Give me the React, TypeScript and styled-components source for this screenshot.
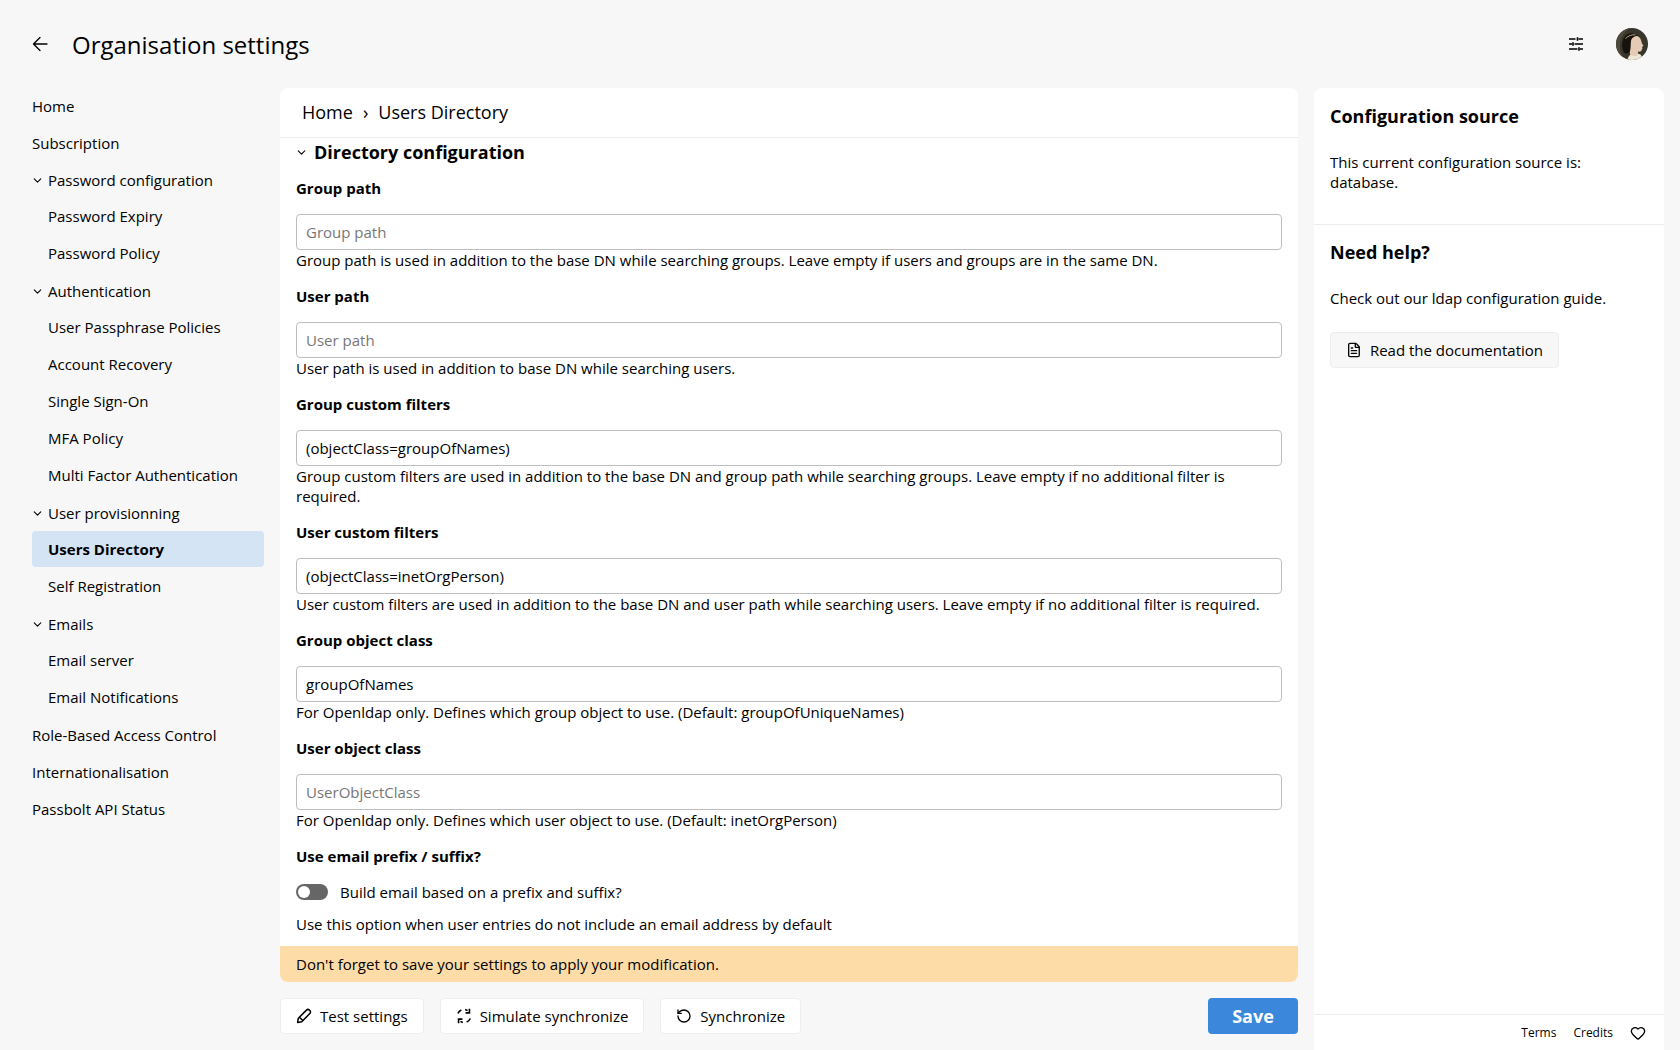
import React from 'react';
import styled, { createGlobalStyle } from 'styled-components';
import { ChevronDown, FileText, Heart, RotateCcw } from 'lucide-react';

const GlobalStyle = createGlobalStyle`
    html, body {
        margin: 0;
        padding: 0;
        height: 100%;
        background: #f7f7f7;
    }
    body {
        font-family: 'Open Sans', 'Liberation Sans', sans-serif;
        font-size: 15px;
        color: #000;
    }
    * {
        box-sizing: border-box;
    }
`;

const Page = styled.div`
    display: flex;
    flex-direction: column;
    height: 1050px;
    overflow: hidden;
`;

const Header = styled.header`
    display: flex;
    align-items: center;
    justify-content: space-between;
    height: 88px;
    padding: 0 32px;
    flex: none;
`;

const HeaderLeft = styled.div`
    display: flex;
    align-items: center;
    gap: 24px;
`;

const HeaderRight = styled.div`
    display: flex;
    align-items: center;
    gap: 33px;
`;

const PageTitle = styled.h1`
    margin: 2px 0 0 0;
    font-size: 24px;
    font-weight: 400;
    line-height: 32px;
`;

const Body = styled.div`
    display: flex;
    flex: 1;
    min-height: 0;
`;

const Sidebar = styled.nav`
    display: flex;
    flex-direction: column;
    gap: 1px;
    width: 280px;
    flex: none;
    padding: 0 16px 0 32px;
`;

const NavGroup = styled.div`
    display: flex;
    flex-direction: column;
    gap: 1px;
    margin: -1px 0 1px 0;
`;

const NavRow = styled.div<{ $level?: number; $active?: boolean }>`
    display: flex;
    align-items: center;
    height: 36px;
    flex: none;
    padding-left: ${({ $level }) => ($level ? '16px' : '0')};
    background: ${({ $active }) => ($active ? '#d4e4f5' : 'transparent')};
    border-radius: 4px;
    font-weight: ${({ $active }) => ($active ? 700 : 400)};
`;

const NavChevron = styled(ChevronDown)`
    width: 13px;
    height: 13px;
    margin-left: -1px;
    margin-right: 4px;
    flex: none;
`;

const Main = styled.main`
    display: flex;
    flex-direction: column;
    gap: 16px;
    width: 1018px;
    flex: none;
    padding-bottom: 16px;
`;

const Card = styled.section`
    display: flex;
    flex-direction: column;
    flex: 1;
    min-height: 0;
    background: #fff;
    border-radius: 8px;
    overflow: hidden;
`;

const Breadcrumbs = styled.div`
    display: flex;
    align-items: center;
    gap: 10px;
    height: 50px;
    padding: 0 22px 2px 22px;
    flex: none;
    border-bottom: 1px solid #eee;
    font-size: 18px;
`;

const Form = styled.div`
    flex: 1;
    min-height: 0;
    overflow: hidden;
    padding: 0 16px;
`;

const SectionTitle = styled.h2`
    display: flex;
    align-items: center;
    gap: 6px;
    margin: -1px 0 11px -1px;
    height: 30px;
    font-size: 18px;
    font-weight: 700;
`;

const SectionChevron = styled(ChevronDown)`
    width: 13px;
    height: 13px;
`;

const Field = styled.div`
    display: flex;
    flex-direction: column;
    margin-bottom: 16px;
    line-height: 20px;
    &:last-child {
        margin-bottom: 0;
    }
`;

const Label = styled.label`
    font-weight: 700;
    margin-bottom: 16px;
`;

const Input = styled.input`
    height: 36px;
    padding: 0 9px;
    border: 1px solid #bdbdbd;
    border-radius: 4px;
    background: #fff;
    font: inherit;
    color: #000;
    outline: none;
    &::placeholder {
        color: #777;
        opacity: 1;
    }
`;

const Help = styled.div`
    color: #000;
`;

const ToggleRow = styled.div`
    display: flex;
    align-items: center;
    gap: 12px;
    height: 16px;
    margin: 2px 0 14px 0;
`;

const Toggle = styled.span`
    position: relative;
    width: 32px;
    height: 16px;
    flex: none;
    border-radius: 8px;
    background: #666;
    &::after {
        content: '';
        position: absolute;
        left: 2px;
        top: 2px;
        width: 12px;
        height: 12px;
        border-radius: 50%;
        background: #fff;
    }
`;

const Banner = styled.div`
    display: flex;
    align-items: center;
    height: 36px;
    padding: 0 16px;
    flex: none;
    background: #fedca8;
`;

const Actions = styled.div`
    display: flex;
    align-items: center;
    gap: 16px;
    height: 36px;
    flex: none;
`;

const Button = styled.button`
    display: inline-flex;
    align-items: center;
    gap: 8px;
    height: 36px;
    padding: 0 15px;
    border: 1px solid #eee;
    border-radius: 4px;
    background: #fff;
    font: inherit;
    color: #000;
    white-space: nowrap;
`;

const DocButton = styled(Button)`
    background: #f7f7f7;
    width: 229px;
    margin-top: 8px;
`;

const SaveButton = styled.button`
    width: 90px;
    height: 36px;
    margin-left: auto;
    border: 0;
    border-radius: 4px;
    background: #3a87db;
    color: #fff;
    font-family: inherit;
    font-size: 18px;
    font-weight: 700;
`;

const Aside = styled.aside`
    display: flex;
    flex-direction: column;
    width: 350px;
    flex: none;
    margin: 0 16px 0 16px;
    background: #fff;
    border-radius: 8px 8px 0 0;
`;

const AsideSection = styled.div`
    display: flex;
    flex-direction: column;
    align-items: flex-start;
    padding: 16px;
    line-height: 20px;
    & + & {
        padding-top: 15px;
        border-top: 1px solid #eee;
    }
`;

const AsideTitle = styled.h3`
    margin: 0 0 24px 0;
    font-size: 18px;
    font-weight: 700;
    line-height: 24px;
`;

const AsideText = styled.p`
    margin: 0 0 16px 0;
`;

const AsideFooter = styled.footer`
    display: flex;
    align-items: center;
    justify-content: flex-end;
    gap: 17px;
    height: 36px;
    margin-top: auto;
    padding-right: 18px;
    border-top: 1px solid #eee;
    font-size: 12px;
`;

const BackIcon = () => (
    <svg width="16" height="16" viewBox="0 0 16 16" fill="none" stroke="#000" strokeWidth="1.3" strokeLinecap="round" strokeLinejoin="round">
        <path d="M15 8H1.5M8 1.5L1.5 8L8 14.5" />
    </svg>
);

const FilterIcon = () => (
    <svg width="14" height="14" viewBox="0 0 14 14" fill="none" stroke="#000" strokeWidth="1.4">
        <path d="M0 2H6.5M9.5 2H14M0 7H3M5.5 7H14M0 12H8.5M11 12H14" />
        <path d="M8.5 0.2V3.8M4 5.2V8.8M10 10.2V13.8" strokeWidth="1.6" />
    </svg>
);

const PenIcon = () => (
    <svg width="16" height="16" viewBox="0 0 15 15" fill="none" stroke="#000" strokeWidth="1.4" strokeLinejoin="round">
        <path d="M1.5 13.5L2.2 9.6L9.8 2C10.6 1.2 11.8 1.2 12.6 2L13 2.4C13.8 3.2 13.8 4.4 13 5.2L5.4 12.8Z" />
        <path d="M3.2 8.6L6.4 11.8" />
    </svg>
);

const SimulateIcon = () => (
    <svg width="16" height="16" viewBox="0 0 15 15" fill="none" stroke="#000" strokeWidth="1.5">
        <path d="M1.8 5.2A6 6 0 0 1 5 1.9M8.6 1.5A6 6 0 0 1 10.8 2.4M13.4 9.8A6 6 0 0 1 10 13.1M6.4 13.5A6 6 0 0 1 4.2 12.6" />
        <path d="M12.6 0.8V4.6H9M2.4 14.2V10.4H6" />
    </svg>
);

const Avatar = () => (
    <svg width="32" height="32" viewBox="0 0 32 32">
        <defs>
            <clipPath id="avatar-clip">
                <circle cx="16" cy="16" r="16" />
            </clipPath>
        </defs>
        <g clipPath="url(#avatar-clip)">
            <rect width="32" height="32" fill="#38362c" />
            <path d="M0 0H14C8 4 4 10 4 18 4 24 6 28 9 32H0Z" fill="#4d4a3c" />
            <path d="M13 28C16 25 22 25 25 27L27 32H11Z" fill="#efe6d6" />
            <path d="M13 13C13 7 20 6 23.5 9.5 25 11 25.5 14 26 15.5L27.5 18 26 18.8 26.5 20.5 25.8 21.2C26 23 24.5 24 22 23.6L22 27C20 28.5 16 28 14 26.5Z" fill="#e6cbb4" />
            <path d="M10 7C14 4 20 5 22 8 18 8 15.5 10 15 13 14.5 16 15 20 14 23 12.5 26.5 9 26.5 7.5 23.5 5 18 6 11 10 7Z" fill="#17120d" />
            <path d="M9.5 10.5C12.5 7.5 16 6.5 19.5 6.8" fill="none" stroke="#b5a78c" strokeWidth="1" />
        </g>
    </svg>
);

type NavItem = { label: string; active?: boolean };
type NavEntry = { label: string; children?: NavItem[] };

const navEntries: NavEntry[] = [
    { label: 'Home' },
    { label: 'Subscription' },
    {
        label: 'Password configuration',
        children: [{ label: 'Password Expiry' }, { label: 'Password Policy' }],
    },
    {
        label: 'Authentication',
        children: [
            { label: 'User Passphrase Policies' },
            { label: 'Account Recovery' },
            { label: 'Single Sign-On' },
            { label: 'MFA Policy' },
            { label: 'Multi Factor Authentication' },
        ],
    },
    {
        label: 'User provisionning',
        children: [{ label: 'Users Directory', active: true }, { label: 'Self Registration' }],
    },
    {
        label: 'Emails',
        children: [{ label: 'Email server' }, { label: 'Email Notifications' }],
    },
    { label: 'Role-Based Access Control' },
    { label: 'Internationalisation' },
    { label: 'Passbolt API Status' },
];

const fields = [
    {
        label: 'Group path',
        placeholder: 'Group path',
        help: 'Group path is used in addition to the base DN while searching groups. Leave empty if users and groups are in the same DN.',
    },
    {
        label: 'User path',
        placeholder: 'User path',
        help: 'User path is used in addition to base DN while searching users.',
    },
    {
        label: 'Group custom filters',
        value: '(objectClass=groupOfNames)',
        help: 'Group custom filters are used in addition to the base DN and group path while searching groups. Leave empty if no additional filter is required.',
    },
    {
        label: 'User custom filters',
        value: '(objectClass=inetOrgPerson)',
        help: 'User custom filters are used in addition to the base DN and user path while searching users. Leave empty if no additional filter is required.',
    },
    {
        label: 'Group object class',
        value: 'groupOfNames',
        help: 'For Openldap only. Defines which group object to use. (Default: groupOfUniqueNames)',
    },
    {
        label: 'User object class',
        placeholder: 'UserObjectClass',
        help: 'For Openldap only. Defines which user object to use. (Default: inetOrgPerson)',
    },
];

const App: React.FC = () => {
    return (
        <Page>
            <GlobalStyle />
            <Header>
                <HeaderLeft>
                    <BackIcon />
                    <PageTitle>Organisation settings</PageTitle>
                </HeaderLeft>
                <HeaderRight>
                    <FilterIcon />
                    <Avatar />
                </HeaderRight>
            </Header>
            <Body>
                <Sidebar>
                    {navEntries.map((entry) => (
                        <React.Fragment key={entry.label}>
                            <NavRow>
                                {entry.children && <NavChevron strokeWidth={2} />}
                                {entry.label}
                            </NavRow>
                            {entry.children && (
                                <NavGroup>
                                    {entry.children.map((child) => (
                                        <NavRow key={child.label} $level={1} $active={child.active}>
                                            {child.label}
                                        </NavRow>
                                    ))}
                                </NavGroup>
                            )}
                        </React.Fragment>
                    ))}
                </Sidebar>
                <Main>
                    <Card>
                        <Breadcrumbs>
                            <span>Home</span>
                            <span>›</span>
                            <span>Users Directory</span>
                        </Breadcrumbs>
                        <Form>
                            <SectionTitle>
                                <SectionChevron strokeWidth={2} />
                                Directory configuration
                            </SectionTitle>
                            {fields.map((field) => (
                                <Field key={field.label}>
                                    <Label>{field.label}</Label>
                                    <Input placeholder={field.placeholder} defaultValue={field.value} />
                                    <Help>{field.help}</Help>
                                </Field>
                            ))}
                            <Field>
                                <Label>Use email prefix / suffix?</Label>
                                <ToggleRow>
                                    <Toggle />
                                    Build email based on a prefix and suffix?
                                </ToggleRow>
                                <Help>Use this option when user entries do not include an email address by default</Help>
                            </Field>
                        </Form>
                        <Banner>Don't forget to save your settings to apply your modification.</Banner>
                    </Card>
                    <Actions>
                        <Button>
                            <PenIcon />
                            Test settings
                        </Button>
                        <Button>
                            <SimulateIcon />
                            Simulate synchronize
                        </Button>
                        <Button>
                            <RotateCcw size={16} strokeWidth={2} />
                            Synchronize
                        </Button>
                        <SaveButton>Save</SaveButton>
                    </Actions>
                </Main>
                <Aside>
                    <AsideSection>
                        <AsideTitle>Configuration source</AsideTitle>
                        <AsideText>
                            This current configuration source is:
                            <br />
                            database.
                        </AsideText>
                    </AsideSection>
                    <AsideSection>
                        <AsideTitle>Need help?</AsideTitle>
                        <AsideText>Check out our ldap configuration guide.</AsideText>
                        <DocButton>
                            <FileText size={16} strokeWidth={2} />
                            Read the documentation
                        </DocButton>
                    </AsideSection>
                    <AsideFooter>
                        <span>Terms</span>
                        <span>Credits</span>
                        <Heart size={16} strokeWidth={2} />
                    </AsideFooter>
                </Aside>
            </Body>
        </Page>
    );
};

export default App;
